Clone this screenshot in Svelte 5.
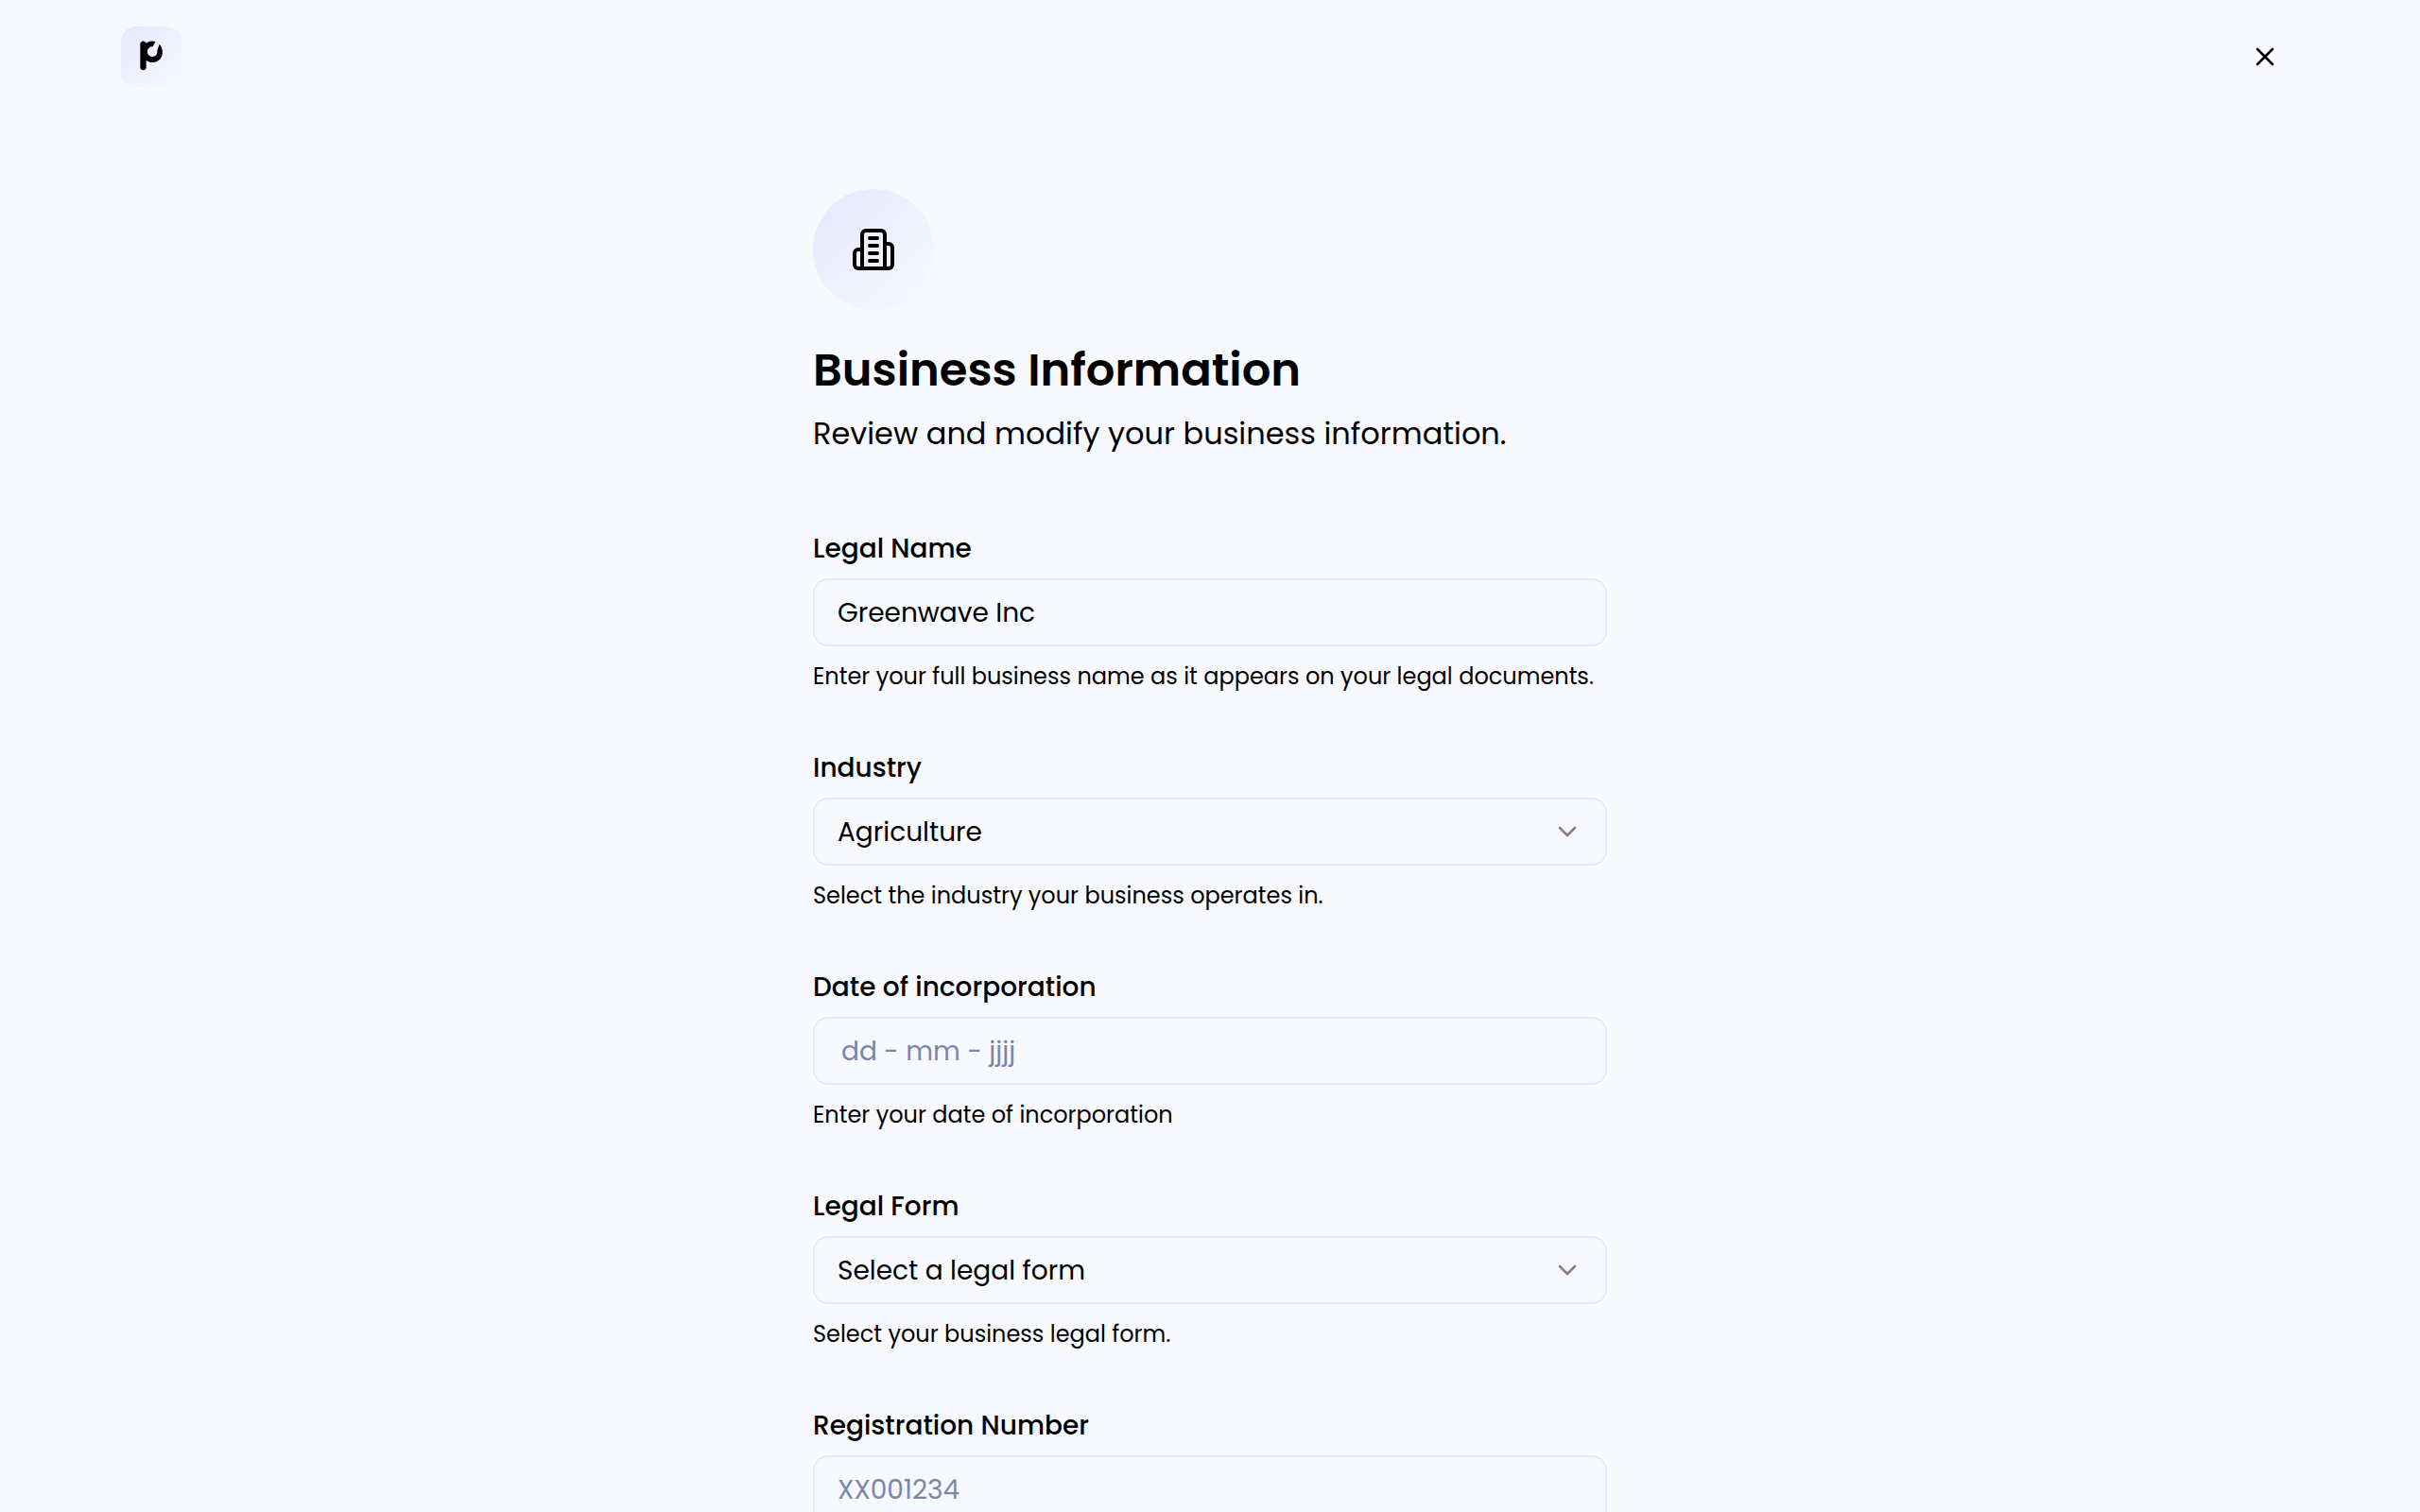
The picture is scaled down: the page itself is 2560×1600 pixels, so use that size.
<script>
  const fields = [
    {
      id: 'legal-name',
      label: 'Legal Name',
      type: 'text',
      value: 'Greenwave Inc',
      help: 'Enter your full business name as it appears on your legal documents.'
    },
    {
      id: 'industry',
      label: 'Industry',
      type: 'select',
      options: ['Agriculture', 'Construction', 'Retail'],
      help: 'Select the industry your business operates in.'
    },
    {
      id: 'incorporation-date',
      label: 'Date of incorporation',
      type: 'date',
      value: '',
      placeholder: 'dd - mm - jjjj',
      help: 'Enter your date of incorporation'
    },
    {
      id: 'legal-form',
      label: 'Legal Form',
      type: 'select',
      options: ['Select a legal form', 'Limited company', 'Partnership'],
      help: 'Select your business legal form.'
    },
    {
      id: 'registration-number',
      label: 'Registration Number',
      type: 'text',
      value: '',
      placeholder: 'XX001234'
    }
  ];
</script>

<div class="page">
  <header>
    <a class="logo" href="/" aria-label="Home">
      <svg viewBox="0 0 192 192" aria-hidden="true">
        <path d="M61 57C61 44 76 43 80 53C89 46 99 45 109 48L101 64A16 16 0 1 0 115 76L122 56C139 73 135 114 99 114C92 114 85 111 80 107V130C80 142 61 142 61 130Z" />
      </svg>
    </a>
    <button class="close" type="button" aria-label="Close">
      <svg class="icon" viewBox="0 0 24 24" aria-hidden="true">
        <path d="M18 6 6 18M6 6l12 12" />
      </svg>
    </button>
  </header>

  <main>
    <div class="badge">
      <svg class="icon" viewBox="0 0 24 24" aria-hidden="true">
        <path d="M6 22V4a2 2 0 0 1 2-2h8a2 2 0 0 1 2 2v18Z" />
        <path d="M6 12H4a2 2 0 0 0-2 2v6a2 2 0 0 0 2 2h2" />
        <path d="M18 9h2a2 2 0 0 1 2 2v9a2 2 0 0 1-2 2h-2" />
        <path d="M10 6h4M10 10h4M10 14h4M10 18h4" />
      </svg>
    </div>
    <h1>Business Information</h1>
    <p class="subtitle">Review and modify your business information.</p>

    <form>
      {#each fields as field (field.id)}
        <div class="field">
          <label for={field.id}>{field.label}</label>
          {#if field.type === 'select'}
            <div class="select">
              <select id={field.id}>
                {#each field.options as option}
                  <option>{option}</option>
                {/each}
              </select>
              <svg class="icon" viewBox="0 0 24 24" aria-hidden="true">
                <path d="m6 9 6 6 6-6" />
              </svg>
            </div>
          {:else}
            <input
              id={field.id}
              class:date={field.type === 'date'}
              type="text"
              value={field.value}
              placeholder={field.placeholder}
            />
          {/if}
          {#if field.help}
            <p class="help">{field.help}</p>
          {/if}
        </div>
      {/each}
    </form>
  </main>
</div>

<style>
  :global(body) {
    background: #f8f9ff;
  }

  .page {
    box-sizing: border-box;
    height: 100vh;
    overflow-y: auto;
    scrollbar-width: none;
    background: #f8f9ff;
    color: #000;
    font-family: Poppins, Inter, sans-serif;
  }

  header {
    display: flex;
    align-items: center;
    justify-content: space-between;
    padding: 24px 5%;
  }

  .logo {
    width: 64px;
    height: 64px;
    border-radius: 16px;
    background: linear-gradient(135deg, #e6e6ff, #f8f9ff);
  }

  .logo svg {
    display: block;
  }

  .icon {
    display: block;
    fill: none;
    stroke: currentColor;
    stroke-width: 2;
    stroke-linecap: round;
    stroke-linejoin: round;
  }

  .close {
    padding: 20px;
    border: 0;
    background: none;
    color: inherit;
    cursor: pointer;
  }

  .close .icon {
    width: 32px;
    height: 32px;
  }

  main {
    box-sizing: border-box;
    width: 100%;
    max-width: 840px;
    margin: 0 auto;
    padding: 80px 0;
  }

  .badge {
    display: grid;
    place-items: center;
    width: 128px;
    height: 128px;
    border-radius: 50%;
    background: linear-gradient(135deg, #e6e6ff, #f8f9ff);
  }

  .badge .icon {
    width: 48px;
    height: 48px;
  }

  h1 {
    margin: 28px 0 7px;
    font-size: 48px;
    font-weight: 600;
    line-height: 72px;
  }

  .subtitle {
    margin: 0;
    font-size: 32px;
    line-height: 48px;
  }

  form {
    display: flex;
    flex-direction: column;
    gap: 54px;
    margin-top: 77px;
  }

  .field {
    display: flex;
    flex-direction: column;
    gap: 10px;
  }

  label {
    font-size: 28px;
    font-weight: 500;
    line-height: 42px;
  }

  input,
  select {
    box-sizing: border-box;
    width: 100%;
    height: 72px;
    padding: 0 24px;
    border: 2px solid #e8e6ff;
    border-radius: 16px;
    background: transparent;
    color: inherit;
    font: inherit;
    font-size: 28px;
    appearance: none;
  }

  input {
    padding-top: 2px;
  }

  input::placeholder {
    color: #7886ad;
    opacity: 1;
  }

  .date {
    padding-inline: 28px;
  }

  .select {
    display: grid;
    align-items: center;
  }

  .select > * {
    grid-area: 1 / 1;
  }

  .select .icon {
    justify-self: end;
    width: 32px;
    height: 32px;
    margin-right: 26px;
    color: #8a8080;
    pointer-events: none;
  }

  .help {
    margin: 0;
    font-size: 24px;
    line-height: 44px;
  }
</style>
